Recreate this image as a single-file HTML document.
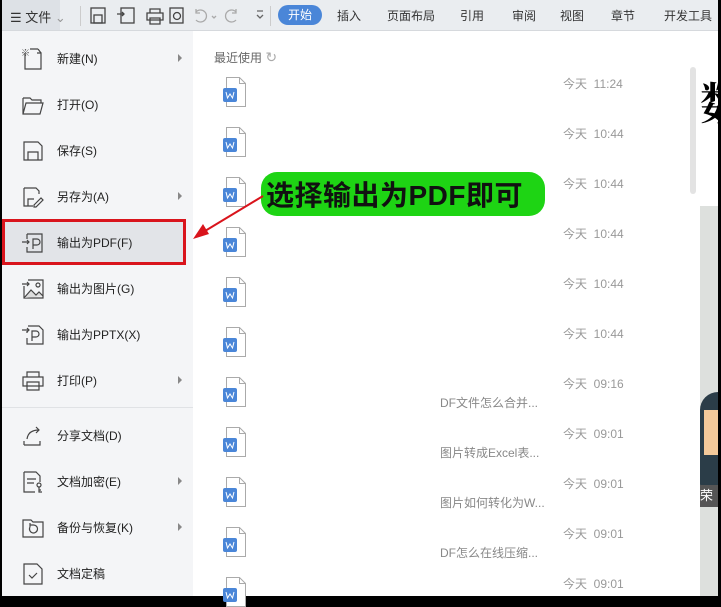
<!DOCTYPE html>
<html><head><meta charset="utf-8"><style>
*{margin:0;padding:0;box-sizing:border-box}
body{width:721px;height:599px;overflow:hidden;background:#000;position:relative;font-family:"Liberation Sans","Noto Sans CJK SC",sans-serif;font-size:12px;color:#333}
.a{position:absolute}
.tb{left:2px;top:0;width:716px;height:31px;background:#eaedf0;border-bottom:1px solid #d6d9dd}
.menu{left:2px;top:31px;width:191px;height:565px;background:#f4f5f7}
.list{left:193px;top:31px;width:507px;height:565px;background:#fff}
.mi{position:absolute;left:0;width:191px;height:46px}
.mi span{position:absolute;left:55px;top:15px;font-size:12px;color:#222}
.mi svg{position:absolute;left:19px;top:12px}
.arr{position:absolute;left:176px;top:19px;width:0;height:0;border-left:4px solid #888;border-top:4px solid transparent;border-bottom:4px solid transparent}
.doc{position:absolute;left:30px;width:23px;height:30px}
.t{position:absolute;left:370px;font-size:12px;color:#999}
.d{position:absolute;left:247px;font-size:12px;color:#888}
.tab{position:absolute;top:7px;font-size:12px;color:#333}
</style></head><body>
<svg width="0" height="0" style="position:absolute"><defs><g id="dc"><path d="M3.5 .5h13l6 6v23h-19z" fill="#fff" stroke="#aaa"/><path d="M16.5 .5v6h6" fill="none" stroke="#aaa"/><rect x="0" y="11" width="14" height="14" rx="2" fill="#4a86d8"/><path d="M3 15l1.5 6 2.5-4 2.5 4 1.5-6" fill="none" stroke="#fff" stroke-width="1"/></g></defs></svg>
<div class="a tb">
 <div class="a" style="left:0;top:0;width:58px;height:30px;background:#dde1e6"></div>
 <div class="a" style="left:8px;top:7px;font-size:13px">☰ 文件 <span style="color:#999">⌄</span></div>
 <div class="a" style="left:78px;top:6px;width:1px;height:20px;background:#ccc"></div>
 <svg class="a" style="left:86px;top:6px" width="180" height="20" fill="none" stroke="#444" stroke-width="1.3">
  <rect x="3" y="2" width="14" height="15"/><rect x="6" y="9" width="8" height="8"/>
  <rect x="33" y="2" width="13" height="15"/><path d="M29 8h7M34 6l2 2-2 2"/>
  <path d="M59 7h16v7h-16zM62 7V3h10v4M62 12h10v6h-10z"/>
  <rect x="82" y="2" width="13" height="15"/><circle cx="89" cy="10" r="3.5"/>
  <path d="M108 6a6 6 0 1 1 0 8M108 3v4h4" stroke="#aaa"/><path d="M124 10l2 2 2-2" stroke="#aaa"/>
  <path d="M148 6a6 6 0 1 0 0 8M148 3v4h-4" stroke="#aaa"/><path d="M169 9l3 3 3-3M169 5h6" stroke="#666"/>
 </svg>
 <div class="a" style="left:268px;top:6px;width:1px;height:20px;background:#ccc"></div>
 <div class="a" style="left:276px;top:5px;width:44px;height:20px;border-radius:10px;background:#4a86d8;color:#fff;font-size:12px;text-align:center;line-height:20px">开始</div>
 <div class="tab" style="left:335px">插入</div>
 <div class="tab" style="left:385px">页面布局</div>
 <div class="tab" style="left:458px">引用</div>
 <div class="tab" style="left:510px">审阅</div>
 <div class="tab" style="left:558px">视图</div>
 <div class="tab" style="left:609px">章节</div>
 <div class="tab" style="left:662px">开发工具</div>
</div>
<div class="a" style="left:700px;top:31px;width:18px;height:175px;background:#fff"></div>
<div class="a" style="left:700px;top:206px;width:18px;height:390px;background:#dde0dd"></div>
<div class="a" style="left:700px;top:80px;font-family:'Liberation Serif','Noto Serif CJK SC',serif;font-size:44px;font-weight:bold;color:#000;overflow:hidden;width:18px;line-height:50px">数</div>
<div class="a" style="left:700px;top:392px;width:18px;height:110px;background:#2b3d48;border-radius:30px 0 0 30px"></div>
<div class="a" style="left:704px;top:410px;width:14px;height:45px;background:#f3c99a"></div>
<div class="a" style="left:700px;top:485px;width:18px;height:22px;background:#555;color:#fff;font-size:13px">荣</div>
<div class="a menu">
 <div class="mi" style="top:4px"><svg width="24" height="24" fill="none" stroke="#444" stroke-width="1.2"><path d="M4 6v16h16V6h-4"/><path d="M17 2h-8M17 2l3 4"/><text x="0" y="9" font-size="9" fill="#444" stroke="none">※</text></svg><span>新建(N)</span><i class="arr"></i></div>
 <div class="mi" style="top:50px"><svg width="24" height="24" fill="none" stroke="#444" stroke-width="1.2"><path d="M2 5h7l2 2h9v3M2 5v16h17l3-11H5L2 21"/></svg><span>打开(O)</span></div>
 <div class="mi" style="top:96px"><svg width="24" height="24" fill="none" stroke="#444" stroke-width="1.2"><path d="M3 3h14l4 4v14H3z"/><path d="M7 21v-8h10v8"/></svg><span>保存(S)</span></div>
 <div class="mi" style="top:142px"><svg width="24" height="24" fill="none" stroke="#444" stroke-width="1.2"><path d="M3 3h12l3 3v3M3 3v18h9M7 21v-7h6"/><path d="M13 20l7-7 2 2-7 7h-2z"/></svg><span>另存为(A)</span><i class="arr"></i></div>
 <div class="mi" style="top:188px;height:46px;background:#e2e4e8;border:3px solid #d9141c;width:184px;left:0"><svg style="left:16px;top:9px" width="24" height="24" fill="none" stroke="#444" stroke-width="1.2"><path d="M6 3h15v18H6v-5M6 8V3"/><path d="M1 11h7M6 9l2 2-2 2"/><path d="M12 18v-10h4a3 3 0 0 1 0 6h-4"/></svg><span style="left:52px;top:12px">输出为PDF(F)</span></div>
 <div class="mi" style="top:234px"><svg width="24" height="24" fill="none" stroke="#444" stroke-width="1.2"><path d="M7 3h15v18H3V9"/><path d="M1 7h7M6 5l2 2-2 2"/><path d="M3 21l7-8 5 5 3-3 4 4" fill="#ddd"/><circle cx="17" cy="8" r="2"/></svg><span>输出为图片(G)</span></div>
 <div class="mi" style="top:280px"><svg width="24" height="24" fill="none" stroke="#444" stroke-width="1.2"><path d="M7 3h11l4 4v14H6v-6M6 10V8"/><path d="M1 7h7M6 5l2 2-2 2"/><path d="M11 18v-10h4a3 3 0 0 1 0 6h-4"/></svg><span>输出为PPTX(X)</span></div>
 <div class="mi" style="top:326px"><svg width="24" height="24" fill="none" stroke="#444" stroke-width="1.2"><path d="M2 8h20v9h-20zM6 8V3h12v5M6 13h12v8H6z"/></svg><span>打印(P)</span><i class="arr"></i></div>
 <div class="a" style="left:0;top:376px;width:191px;height:1px;background:#e0e2e5"></div>
 <div class="mi" style="top:381px"><svg width="24" height="24" fill="none" stroke="#444" stroke-width="1.2"><path d="M3 21v-4M3 21h16v-4M6 15c1-7 6-9 12-9M15 3l3 3-3 3"/></svg><span>分享文档(D)</span></div>
 <div class="mi" style="top:427px"><svg width="24" height="24" fill="none" stroke="#444" stroke-width="1.2"><path d="M3 2h12l4 4v6M3 2v20h11M6 9h9M6 13h7"/><circle cx="18" cy="15" r="2"/><path d="M18 17v5h3M18 20h2"/></svg><span>文档加密(E)</span><i class="arr"></i></div>
 <div class="mi" style="top:473px"><svg width="24" height="24" fill="none" stroke="#444" stroke-width="1.2"><path d="M2 4h8l2 2h10v15H2z"/><path d="M9 11a4 4 0 1 0 3-2h-3M9 7v4"/></svg><span>备份与恢复(K)</span><i class="arr"></i></div>
 <div class="mi" style="top:519px"><svg width="24" height="24" fill="none" stroke="#444" stroke-width="1.2"><path d="M3 2h13l5 5v15H3z"/><path d="M8 13l3 3 5-5"/></svg><span>文档定稿</span></div>
</div>
<div class="a list">
 <div class="a" style="left:21px;top:18px;color:#666">最近使用 <span style="color:#aaa;font-size:14px">↻</span></div>
 <div class="a" style="left:497px;top:36px;width:6px;height:127px;background:#e3e3e3;border-radius:3px"></div>
 <svg class="doc" style="top:46px"><use href="#dc"/></svg><div class="t" style="top:44px">今天&nbsp; 11:24</div>
 <svg class="doc" style="top:96px"><use href="#dc"/></svg><div class="t" style="top:94px">今天&nbsp; 10:44</div>
 <svg class="doc" style="top:146px"><use href="#dc"/></svg><div class="t" style="top:144px">今天&nbsp; 10:44</div>
 <svg class="doc" style="top:196px"><use href="#dc"/></svg><div class="t" style="top:194px">今天&nbsp; 10:44</div>
 <svg class="doc" style="top:246px"><use href="#dc"/></svg><div class="t" style="top:244px">今天&nbsp; 10:44</div>
 <svg class="doc" style="top:296px"><use href="#dc"/></svg><div class="t" style="top:294px">今天&nbsp; 10:44</div>
 <svg class="doc" style="top:346px"><use href="#dc"/></svg><div class="t" style="top:344px">今天&nbsp; 09:16</div><div class="d" style="top:363px">DF文件怎么合并...</div>
 <svg class="doc" style="top:396px"><use href="#dc"/></svg><div class="t" style="top:394px">今天&nbsp; 09:01</div><div class="d" style="top:413px">图片转成Excel表...</div>
 <svg class="doc" style="top:446px"><use href="#dc"/></svg><div class="t" style="top:444px">今天&nbsp; 09:01</div><div class="d" style="top:463px">图片如何转化为W...</div>
 <svg class="doc" style="top:496px"><use href="#dc"/></svg><div class="t" style="top:494px">今天&nbsp; 09:01</div><div class="d" style="top:513px">DF怎么在线压缩...</div>
 <svg class="doc" style="top:546px"><use href="#dc"/></svg><div class="t" style="top:544px">今天&nbsp; 09:01</div>
</div>
<div class="a" style="left:261px;top:172px;width:284px;height:44px;background:#1ed414;border-radius:16px"></div>
<div class="a" style="left:266px;top:174px;font-size:28px;font-weight:bold;color:#111;letter-spacing:0.5px;white-space:nowrap">选择输出为PDF即可</div>
<svg class="a" style="left:185px;top:190px" width="85" height="60"><path d="M78 6L20 41" stroke="#d9141c" stroke-width="2"/><path d="M8 49l10-15 6 10z" fill="#d9141c"/></svg>
</body></html>
